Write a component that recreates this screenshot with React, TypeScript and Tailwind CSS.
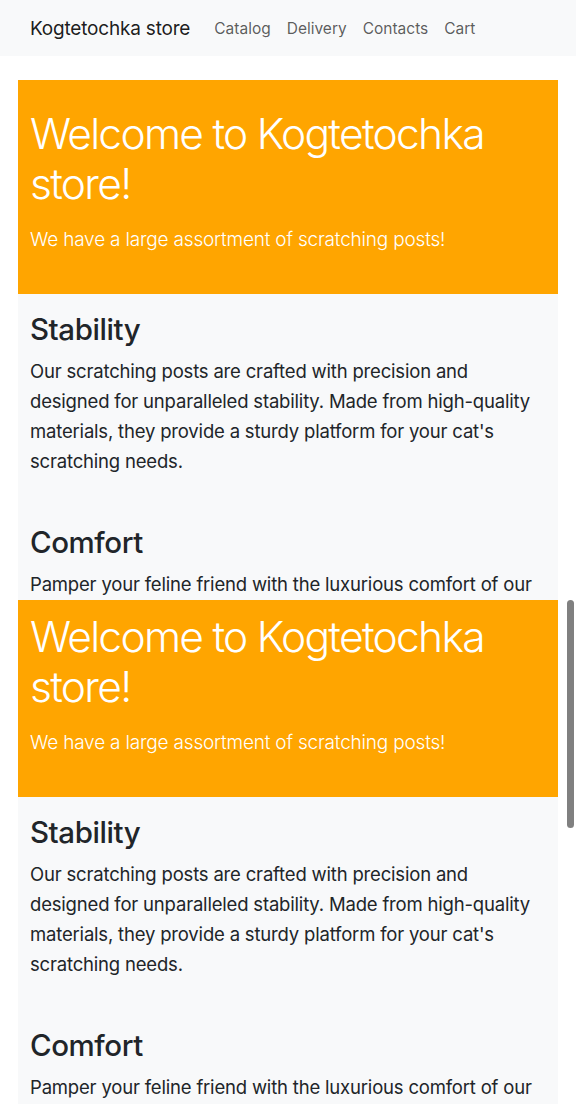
const links = ["Catalog", "Delivery", "Contacts", "Cart"];

const features = [
  {
    title: "Stability",
    text: "Our scratching posts are crafted with precision and designed for unparalleled stability. Made from high-quality materials, they provide a sturdy platform for your cat's scratching needs.",
  },
  {
    title: "Comfort",
    text: "Pamper your feline friend with the luxurious comfort of our scratching posts. Soft, cozy surfaces invite your cat to stretch, scratch and relax for hours.",
  },
  {
    title: "Durability",
    text: "Built to last, our scratching posts withstand even the most enthusiastic claws, keeping their shape and charm for years.",
  },
];

function Page() {
  return (
    <div className="bg-white pb-10">
      {/* Navbar */}
      <nav className="h-14 bg-[#f8f9fa] flex items-center px-[30px] pt-[2px]">
        <span className="text-[19px] tracking-[-0.01em] text-black/90 mr-4">Kogtetochka store</span>
        <ul className="flex">
          {links.map((l) => (
            <li key={l} className="px-2 text-[15.5px] text-black/65">
              {l}
            </li>
          ))}
        </ul>
      </nav>

      <main className="mx-[18px] mt-6">
        {/* Hero */}
        <section className="bg-[#ffa500] px-3 pt-[29px] pb-[39px] text-white">
          <h1 className="text-[42.5px] leading-[50px] font-light tracking-[-0.04em]">
            Welcome to Kogtetochka store!
          </h1>
          <p className="mt-4 text-[19px] leading-[30px] font-light tracking-[-0.01em]">
            We have a large assortment of scratching posts!
          </p>
        </section>

        {/* Features */}
        <div className="bg-[#f8f9fa] px-3 pt-[17px] pb-8 text-[#212529]">
          {features.map((f) => (
            <div key={f.title}>
              <h2 className="text-[29.5px] leading-[36px] font-medium tracking-[-0.015em] mb-[9px]">
                {f.title}
              </h2>
              <p className="text-[18.5px] leading-[30px] tracking-[-0.01em] mb-12">{f.text}</p>
            </div>
          ))}
        </div>
      </main>
    </div>
  );
}

export default function App() {
  return (
    <div className="relative w-[576px] h-[1104px] overflow-hidden bg-white font-['Inter',sans-serif]">
      <div className="h-[600px] overflow-hidden">
        <Page />
      </div>
      <div className="relative h-[504px] overflow-hidden">
        <div className="-mt-[97px]">
          <Page />
        </div>
        {/* scrollbar thumb */}
        <div className="absolute right-[2px] top-0 w-[7px] h-[228px] rounded-full bg-[#808080]" />
      </div>
    </div>
  );
}
